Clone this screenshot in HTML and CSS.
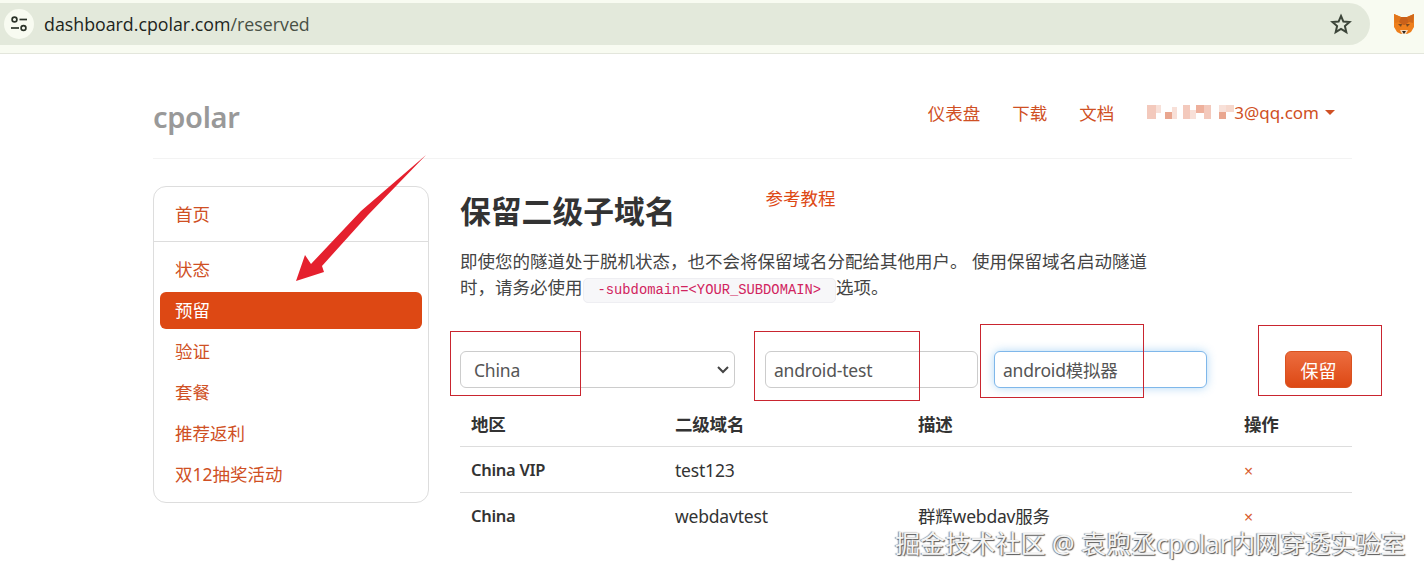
FILE: index.html
```html
<!DOCTYPE html>
<html lang="zh-CN">
<head>
    <meta charset="UTF-8">
    <title>cpolar - 保留二级子域名</title>
    <link rel="stylesheet" href="styles.css">
</head>
<body>
    <div class="browser-bar">
        <div class="omnibox">
            <span class="site-icon">
                <svg width="20" height="20" viewBox="0 0 20 20" fill="none" stroke="#2b3329" stroke-width="1.7">
                    <circle cx="5.5" cy="5.5" r="2.4"/>
                    <path d="M10.5 5.5h7.5"/>
                    <circle cx="14.5" cy="14" r="2.4"/>
                    <path d="M2 14h8"/>
                </svg>
            </span>
            <span class="url">dashboard.cpolar.com<span class="url__path">/reserved</span></span>
            <svg class="star" width="24" height="24" viewBox="0 0 24 24" fill="none" stroke="#3c4539" stroke-width="2" stroke-linejoin="miter">
                <path d="M12 4l2.4 5.6 6.1.5-4.6 4 1.4 6L12 16.9l-5.3 3.2 1.4-6-4.6-4 6.1-.5z"/>
            </svg>
        </div>
        <svg class="fox" width="22" height="22" viewBox="0 0 22 22">
            <polygon points="1,1 8,4 14,4 21,1 21,14 18,19 14,21 8,21 4,19 1,14" fill="#ee7f1c"/>
            <polygon points="1,1 8,4 6,9 2,10" fill="#e2761b"/>
            <polygon points="21,1 14,4 16,9 20,10" fill="#d0681a"/>
            <polygon points="6,9 8,4 14,4 16,9 12,12 10,12" fill="#c9611a"/>
            <polygon points="5,11 9,11 8,14" fill="#7a4a22"/>
            <polygon points="17,11 13,11 14,14" fill="#7a4a22"/>
            <polygon points="7,17 15,17 13,21 9,21" fill="#f2d9bf"/>
            <polygon points="9,18 13,18 11,21" fill="#2a211b"/>
        </svg>
    </div>

    <div class="container">
        <div class="navbar">
            <a class="logo">cpolar</a>
            <div class="nav-links">
                <a>仪表盘</a>
                <a>下载</a>
                <a>文档</a>
                <a class="user">
                    <svg class="mosaic" width="87" height="14" viewBox="0 0 87 14">
                        <rect x="0" y="0" width="9" height="14" fill="#f3c9bc"/>
                        <rect x="9" y="0" width="5" height="8" fill="#f8e0d8"/>
                        <rect x="18" y="7" width="7" height="7" fill="#e9a68f"/>
                        <rect x="25" y="2" width="5" height="12" fill="#f8e0d8"/>
                        <rect x="36" y="0" width="7" height="14" fill="#f3c9bc"/>
                        <rect x="43" y="5" width="6" height="9" fill="#f8e0d8"/>
                        <rect x="49" y="0" width="8" height="8" fill="#eeb09c"/>
                        <rect x="57" y="0" width="7" height="14" fill="#f3c9bc"/>
                        <rect x="72" y="7" width="7" height="7" fill="#e9a68f"/>
                        <rect x="79" y="0" width="8" height="7" fill="#f6d8cd"/>
                        <rect x="72" y="0" width="7" height="7" fill="#f8e0d8"/>
                    </svg>3@qq.com<span class="caret"></span>
                </a>
            </div>
        </div>

        <div class="layout">
            <div class="sidebar">
                <a class="sidebar__item">首页</a>
                <div class="sidebar__divider"></div>
                <a class="sidebar__item">状态</a>
                <a class="sidebar__item active">预留</a>
                <a class="sidebar__item">验证</a>
                <a class="sidebar__item">套餐</a>
                <a class="sidebar__item">推荐返利</a>
                <a class="sidebar__item">双12抽奖活动</a>
            </div>

            <div class="content">
                <div class="page-head">
                    <h1>保留二级子域名</h1>
                    <a class="tutorial">参考教程</a>
                </div>
                <p class="intro">即使您的隧道处于脱机状态，也不会将保留域名分配给其他用户。 使用保留域名启动隧道时，请务必使用<code>-subdomain=&lt;YOUR_SUBDOMAIN&gt;</code>选项。</p>

                <form class="reserve-form">
                    <select class="field field--region">
                        <option>China</option>
                    </select>
                    <input class="field field--name" type="text" value="android-test">
                    <input class="field field--desc" type="text" value="android模拟器">
                    <button class="save-button" type="button">保留</button>
                </form>

                <table class="domains">
                    <thead>
                        <tr><th class="col-region">地区</th><th class="col-name">二级域名</th><th class="col-desc">描述</th><th>操作</th></tr>
                    </thead>
                    <tbody>
                        <tr><td class="region">China VIP</td><td>test123</td><td></td><td><a class="remove">×</a></td></tr>
                        <tr><td class="region">China</td><td>webdavtest</td><td>群辉webdav服务</td><td><a class="remove">×</a></td></tr>
                    </tbody>
                </table>
            </div>
        </div>
    </div>

    <!-- annotations drawn over the screenshot -->
    <svg class="arrow" width="140" height="135" viewBox="0 0 140 135">
        <polygon points="135,0 77,60 31,111 33,117 5,126 14,100 20,109 70,56" fill="#e5202e"/>
    </svg>
    <div class="mark mark--region"></div>
    <div class="mark mark--name"></div>
    <div class="mark mark--desc"></div>
    <div class="mark mark--save"></div>
    <div class="watermark">掘金技术社区 @ 袁煦丞cpolar内网穿透实验室</div>
</body>
</html>
```

FILE: styles.css
```css
* {
    margin: 0;
    padding: 0;
    box-sizing: border-box;
}

html, body {
    height: 577px;
    overflow: hidden;
}

body {
    position: relative;
    background: #fff;
    color: #333;
    font-family: "Noto Sans", "Noto Sans CJK SC", sans-serif;
    font-size: 17.5px;
}

a {
    color: #cf5024;
    text-decoration: none;
}

/* browser chrome */
.browser-bar {
    height: 54px;
    padding-top: 3px;
    display: flex;
    align-items: flex-start;
    background: #f8fbf1;
    border-bottom: 1px solid #e3e6dc;
}

.omnibox {
    width: 1370px;
    height: 42px;
    padding: 0 17px 0 4px;
    display: flex;
    align-items: center;
    background: #e3e9db;
    border-radius: 0 21px 21px 0;
}

.site-icon {
    width: 30px;
    height: 30px;
    margin-right: 10px;
    display: flex;
    align-items: center;
    justify-content: center;
    background: #f8fbf1;
    border-radius: 50%;
}

.url {
    flex: 1;
    font-family: "Open Sans", sans-serif;
    font-size: 17.8px;
    color: #1d241b;
}

.url__path {
    color: #485045;
}

.fox {
    margin: 10px 0 0 23px;
}

/* page */
.container {
    width: 1199px;
    margin-left: 153px;
}

.navbar {
    height: 105px;
    padding: 12px 17px 0 0;
    display: flex;
    justify-content: space-between;
    align-items: center;
    border-bottom: 1px solid #f3f3f3;
}

.logo {
    margin-top: 9px;
    color: #999;
    font-size: 29px;
    font-weight: 600;
    letter-spacing: -0.3px;
}

.nav-links {
    display: flex;
    align-items: center;
    gap: 32px;
}

.user {
    margin-left: 1px;
    display: flex;
    align-items: center;
    font-size: 17px;
}

.mosaic {
    display: block;
}

.caret {
    margin-left: 6px;
    border-top: 5px solid #cf5024;
    border-left: 5px solid transparent;
    border-right: 5px solid transparent;
}

.layout {
    margin-top: 27px;
    display: grid;
    grid-template-columns: 276px 892px;
    column-gap: 31px;
}

.sidebar {
    height: 317px;
    padding: 9px 6px 8px;
    background: #fff;
    border: 1px solid #ddd;
    border-radius: 13px;
    display: flex;
    flex-direction: column;
    gap: 4px;
}

.sidebar__item {
    height: 37px;
    padding-left: 15px;
    line-height: 37px;
    border-radius: 6px;
    flex-shrink: 0;
}

.sidebar__item.active {
    background: #dd4814;
    color: #fff;
}

.sidebar__divider {
    height: 1px;
    margin: 4px -6px 5px;
    background: #ddd;
}

.page-head {
    height: 50px;
    display: flex;
    align-items: flex-start;
}

.page-head h1 {
    font-size: 30.8px;
    line-height: 50px;
    font-weight: 700;
    color: #333;
}

.tutorial {
    margin-left: 90px;
    line-height: 24px;
    color: #dd4814;
}

.intro {
    width: 692px;
    margin-top: 12px;
    line-height: 26px;
    color: #444;
}

.intro code {
    padding: 4px 14px;
    font-family: "Liberation Mono", monospace;
    font-size: 13.8px;
    line-height: 1;
    color: #d1245e;
    background: #f7f7f9;
    border: 1px solid #eeeef2;
    border-radius: 5px;
}

.reserve-form {
    margin-top: 51px;
    display: flex;
}

.field {
    height: 37px;
    font-family: inherit;
    font-size: 17.5px;
    letter-spacing: -0.2px;
    color: #555;
    background: #fff;
    border: 1px solid #ccc;
    border-radius: 6px;
    outline: none;
}

.field--region {
    width: 275px;
    padding-left: 13px;
    appearance: none;
    background-image: url("data:image/svg+xml,%3Csvg xmlns='http://www.w3.org/2000/svg' width='14' height='9' viewBox='0 0 14 9'%3E%3Cpath d='M2 2l5 5 5-5' fill='none' stroke='%23444' stroke-width='2'/%3E%3C/svg%3E");
    background-repeat: no-repeat;
    background-position: right 4px center;
}

.field--name {
    width: 213px;
    margin-left: 30px;
    padding-left: 8px;
}

.field--desc {
    width: 213px;
    margin-left: 16px;
    padding-left: 8px;
    border-color: #7fb7ea;
    box-shadow: 0 0 10px rgba(82, 168, 236, 0.45);
}

.save-button {
    width: 67px;
    height: 37px;
    margin-left: auto;
    font-family: inherit;
    font-size: 18px;
    color: #fff;
    background: linear-gradient(to bottom, #ec6d3f, #dd4814);
    border: 1px solid #d9521f;
    border-radius: 6px;
}

.domains {
    width: 100%;
    margin-top: 16px;
    border-collapse: collapse;
    table-layout: fixed;
}

.domains th,
.domains td {
    height: 46px;
    padding: 1px 11px 0;
    text-align: left;
    letter-spacing: -0.2px;
    border-bottom: 1px solid #ddd;
}

.domains th {
    height: 42px;
    padding: 0 11px 3px;
    font-weight: 700;
}

.domains tbody tr:last-child td {
    border-bottom: none;
}

.col-region {
    width: 204px;
}

.col-name {
    width: 243px;
}

.col-desc {
    width: 326px;
}

.domains .region {
    font-size: 16.5px;
    font-weight: 600;
    letter-spacing: -0.3px;
}

.remove {
    font-size: 16px;
    color: #d9602f;
}

/* annotations */
.arrow {
    position: absolute;
    left: 291px;
    top: 155px;
}

.mark {
    position: absolute;
    border: 1px solid #c9252f;
}

.mark--region {
    left: 450px;
    top: 331px;
    width: 131px;
    height: 65px;
}

.mark--name {
    left: 754px;
    top: 331px;
    width: 166px;
    height: 70px;
}

.mark--desc {
    left: 980px;
    top: 324px;
    width: 164px;
    height: 74px;
}

.mark--save {
    left: 1258px;
    top: 325px;
    width: 124px;
    height: 71px;
}

.watermark {
    position: absolute;
    left: 895px;
    top: 526px;
    font-size: 25.1px;
    line-height: 34px;
    white-space: nowrap;
    color: #f4f4f4;
    text-shadow: 1px 1px 1px #555, -1px 0 1px #888;
}
```
